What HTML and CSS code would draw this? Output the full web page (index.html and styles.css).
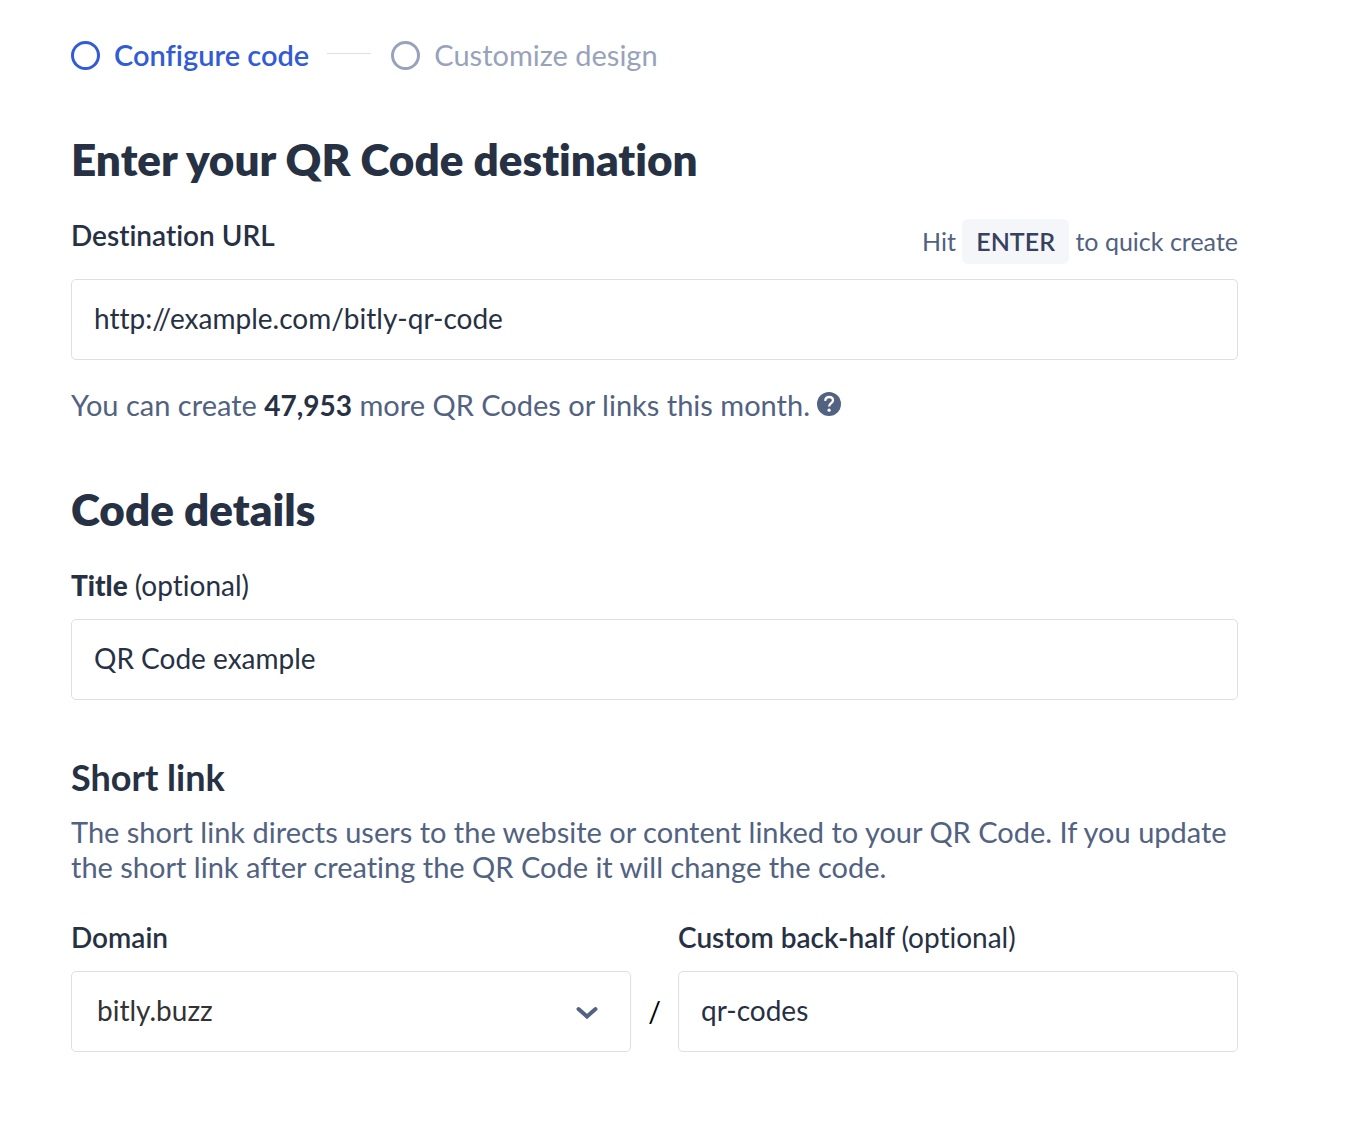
FILE: index.html
```html
<!DOCTYPE html>
<html lang="en">
<head>
<meta charset="utf-8">
<meta name="viewport" content="width=device-width, initial-scale=1">
<title>Create a QR Code</title>
<link rel="stylesheet" href="styles.css">
</head>
<body>
<main class="page">
  <ol class="steps">
    <li class="step step-active" aria-current="step"><span class="step-dot"></span>Configure code</li>
    <li class="step"><span class="step-dot"></span>Customize design</li>
  </ol>
  <form class="form">
    <section class="destination">
      <h1 class="heading">Enter your QR Code destination</h1>
      <div class="label-row">
        <label class="label" for="url">Destination URL</label>
        <p class="hint">Hit <kbd class="key">ENTER</kbd> to quick create</p>
      </div>
      <input class="field" id="url" type="text" value="http://example.com/bitly-qr-code">
      <p class="quota">You can create <strong class="count">47,953</strong> more QR Codes or links this month.
        <svg class="help" viewBox="0 0 24 24" role="img" aria-label="Help"><circle cx="12" cy="12" r="12" fill="#526281"/><path d="M8.200 8.800C8.400 6.300 9.900 5 12.100 5c2.300 0 3.900 1.400 3.900 3.400 0 2.700-3.900 2.900-3.900 6.100" fill="none" stroke="#fff" stroke-width="2.300"/><circle cx="12.100" cy="18.200" r="1.600" fill="#fff"/></svg>
      </p>
    </section>
    <section class="details">
      <h2 class="heading">Code details</h2>
      <label class="label" for="title"><strong>Title</strong> <span class="optional">(optional)</span></label>
      <input class="field" id="title" type="text" value="QR Code example">
    </section>
    <section class="short-link">
      <h3 class="subheading">Short link</h3>
      <p class="description">The short link directs users to the website or content linked to your QR Code. If you update the short link after creating the QR Code it will change the code.</p>
      <div class="link-row">
        <div class="link-part">
          <label class="label" for="domain">Domain</label>
          <div class="select-wrap">
            <select class="field select" id="domain"><option>bitly.buzz</option></select>
            <svg class="chevron" viewBox="0 0 22 14" aria-hidden="true"><path d="M2.500 3l8.500 7.500L19.500 3" fill="none" stroke="#526281" stroke-width="4" stroke-linecap="round"/></svg>
          </div>
        </div>
        <span class="slash">/</span>
        <div class="link-part">
          <label class="label" for="back-half">Custom back-half <span class="optional">(optional)</span></label>
          <input class="field" id="back-half" type="text" value="qr-codes">
        </div>
      </div>
    </section>
  </form>
</main>
</body>
</html>
```
FILE: styles.css
```css
* { box-sizing: border-box; }
body { margin: 0; background: #fff; color: #273144; font: 28px/36px Lato, "Open Sans", sans-serif; font-variant-ligatures: none; }
h1, h2, h3, p, ol { margin: 0; padding: 0; }
.page { padding: 35px 134px 88px 71px; }
.steps { display: flex; align-items: center; list-style: none; }
.step { display: flex; align-items: center; gap: 14px; color: #98a2bb; font-size: 29px; line-height: 40px; }
.step-active { color: #315cd5; font-weight: 600; }
.step-active::after { content: ""; width: 44px; height: 1px; margin: 0 20px 4px 4px; background: #dcdfe8; }
.step-dot { width: 29px; height: 29px; border: 3px solid currentColor; border-radius: 50%; }
.heading { font-size: 44px; font-weight: 800; line-height: 52px; }
.destination { margin-top: 58px; }
.label-row { display: flex; justify-content: space-between; margin: 34px 0 15px; }
.label-row .label { line-height: 32px; }
.label { display: block; font-weight: 600; }
.optional { font-weight: 400; }
.hint { color: #526281; font-size: 25px; line-height: 45px; }
.key { display: inline-block; padding: 0 14px; border-radius: 6px; background: #f4f6fa; color: #36425d; font-family: inherit; font-size: 25px; font-weight: 600; line-height: 45px; }
.field { display: block; width: 100%; height: 81px; padding: 0 22px 4px; border: 1px solid #dcdfe8; border-radius: 5px; background: #fff; color: #273144; font: inherit; }
.quota { margin-top: 27px; color: #526281; font-size: 29px; }
.count { color: #273144; font-size: 28px; }
.help { width: 24px; height: 24px; }
.details { margin-top: 60px; }
.details .label { margin: 32px 0 16px; }
.short-link { margin-top: 55px; }
.subheading { font-size: 36px; line-height: 44px; }
.description { margin-top: 15px; color: #526281; font-size: 29px; line-height: 35px; }
.link-row { display: flex; align-items: flex-end; margin-top: 35px; }
.link-part { flex: 1; min-width: 0; }
.link-part .label { margin-bottom: 16px; }
.select-wrap { position: relative; }
.select { padding: 0 25px 4px; color: #333; appearance: none; }
.chevron { position: absolute; right: 33px; top: 35px; width: 22px; height: 14px; pointer-events: none; }
.slash { width: 47px; color: #000; line-height: 81px; text-align: center; }
```
